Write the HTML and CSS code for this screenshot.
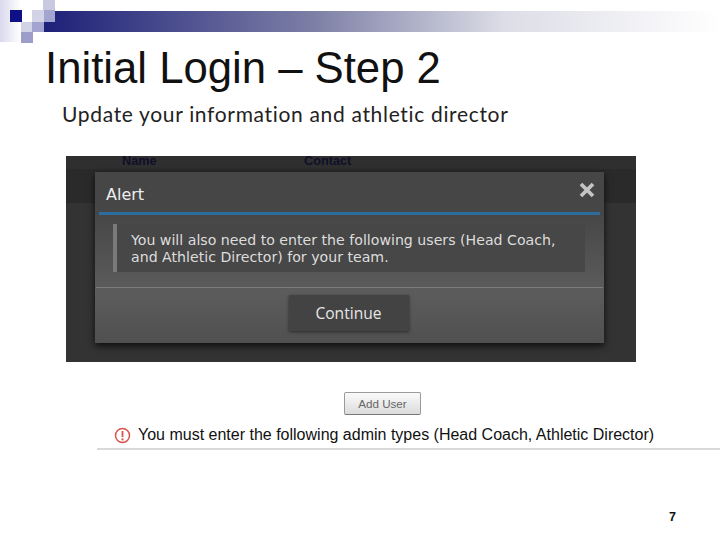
FILE: index.html
```html
<!DOCTYPE html>
<html lang="en">
<head>
    <meta charset="UTF-8">
    <meta name="viewport" content="width=device-width, initial-scale=1.0">
    <title>Initial Login - Step 2</title>
    <link rel="stylesheet" href="styles.css">
</head>
<body>
    <!-- Slide header decoration -->
    <svg class="deco" width="720" height="44" viewBox="0 0 720 44">
        <defs>
            <linearGradient id="barFade" x1="0" x2="1" y1="0" y2="0">
                <stop offset="0" stop-color="#1d2078"/>
                <stop offset="0.4" stop-color="#7d7fa6"/>
                <stop offset="0.68" stop-color="#dcdde6"/>
                <stop offset="1" stop-color="#ffffff"/>
            </linearGradient>
            <linearGradient id="sideFade" x1="0" x2="1" y1="0" y2="0">
                <stop offset="0" stop-color="#d9d9ee"/>
                <stop offset="1" stop-color="#ffffff"/>
            </linearGradient>
        </defs>
        <rect x="44" y="11" width="676" height="21" fill="url(#barFade)"/>
        <rect x="0" y="0" width="21" height="42" fill="url(#sideFade)"/>
        <rect x="10" y="10" width="12" height="12" fill="#0e1085"/>
        <rect x="43" y="0" width="12" height="10" fill="#c9c9e2"/>
        <rect x="32" y="10" width="12" height="12" fill="#d3d3e8"/>
        <rect x="44" y="10" width="11" height="12" fill="#a3a4d0"/>
        <rect x="21" y="22" width="11" height="10" fill="#d3d3e8"/>
        <rect x="32" y="22" width="12" height="10" fill="#a3a4d0"/>
        <rect x="21" y="32" width="12" height="11" fill="#9c9dc9"/>
    </svg>

    <h1 class="title">Initial Login – Step 2</h1>
    <p class="subtitle">Update your information and athletic director</p>

    <!-- Screenshot of the alert -->
    <div class="shot">
        <div class="shot-head">
            <span class="col-name">Name</span>
            <span class="col-contact">Contact</span>
        </div>
        <div class="shot-band"></div>

        <div class="modal">
            <div class="modal-top">
                <span class="modal-title">Alert</span>
                <svg class="modal-close" width="16" height="16" viewBox="0 0 16 16">
                    <path d="M2 2 L14 14 M14 2 L2 14" stroke="#c4c4c4" stroke-width="3.8" fill="none"/>
                </svg>
            </div>
            <div class="modal-msg">You will also need to enter the following users (Head Coach, and Athletic Director) for your team.</div>
            <div class="modal-foot">
                <div class="modal-btn">Continue</div>
            </div>
        </div>
    </div>

    <div class="add-row">
        <div class="add-btn">Add User</div>
    </div>

    <div class="warn">
        <svg width="17" height="17" viewBox="0 0 17 17">
            <circle cx="8.5" cy="8.5" r="7" fill="none" stroke="#d9534a" stroke-width="1.5"/>
            <path d="M8.5 4 V10" stroke="#d9534a" stroke-width="1.8"/>
            <circle cx="8.5" cy="12.4" r="1.1" fill="#d9534a"/>
        </svg>
        <span>You must enter the following admin types (Head Coach, Athletic Director)</span>
    </div>

    <div class="page-num">7</div>
</body>
</html>
```

FILE: styles.css
```css
/* General Body Styling */
body {
    margin: 0;
    width: 720px;
    height: 540px;
    overflow: hidden;
    background-color: #ffffff;
    font-family: 'Liberation Sans', Arial, sans-serif;
}

.deco {
    display: block;
}

/* Slide Titles */
.title {
    margin: 0 0 0 45px;
    font-size: 43.7px;
    line-height: 48px;
    font-weight: normal;
    color: #111111;
}

.subtitle {
    margin: 8px 0 0 62px;
    font-family: 'Lato', 'Open Sans', sans-serif;
    font-size: 21px;
    line-height: 28px;
    letter-spacing: 0.67px;
    color: #222222;
}

/* Screenshot Block */
.shot {
    position: relative;
    width: 570px;
    height: 206px;
    margin: 28px 0 0 66px;
    background-color: #333333;
}

.shot-head {
    display: flex;
    height: 13px;
    background-color: #2f2f2f;
    font-size: 12.7px;
    line-height: 10px;
    font-weight: bold;
    color: #10102a;
}

.col-name {
    margin-left: 56px;
    width: 182px;
}

.shot-band {
    height: 34px;
    background-color: #2a2a2a;
}

/* Alert Modal */
.modal {
    position: absolute;
    left: 29px;
    top: 16px;
    width: 509px;
    height: 171px;
    background: linear-gradient(#464646 0, #464646 40px, #5c5c5c 120px, #505050 100%);
    box-shadow: 0 3px 7px rgba(0, 0, 0, 0.75);
}

.modal-top {
    display: flex;
    justify-content: space-between;
    align-items: flex-start;
    height: 40px;
    margin: 0 4px;
    padding: 0 5px 0 7px;
    border-bottom: 3px solid #2a6d9e;
}

.modal-title {
    margin-top: 13px;
    font-family: 'DejaVu Sans', sans-serif;
    font-size: 16px;
    color: #eeeeee;
}

.modal-close {
    margin-top: 10px;
}

.modal-msg {
    height: 48px;
    box-sizing: border-box;
    margin: 9px 19px 0 18px;
    padding: 8px 14px;
    border-left: 4px solid #7a7a7a;
    background-color: #474747;
    font-family: 'DejaVu Sans', sans-serif;
    font-size: 14.15px;
    line-height: 17px;
    color: #dddddd;
}

.modal-foot {
    display: flex;
    justify-content: center;
    margin: 15px 1px 0;
    padding-top: 7px;
    border-top: 1px solid #7c7c7c;
}

.modal-btn {
    width: 120px;
    height: 36px;
    margin-left: -2px;
    background-color: #434343;
    box-shadow: 0 1px 3px rgba(0, 0, 0, 0.5);
    font-family: 'Open Sans', sans-serif;
    font-size: 15.6px;
    line-height: 37px;
    text-align: center;
    color: #e6e6e6;
}

/* Add User Button */
.add-row {
    display: flex;
    margin: 30px 0 0 344px;
}

.add-btn {
    box-sizing: border-box;
    width: 77px;
    height: 23px;
    border: 1px solid #9a9a9a;
    border-bottom-color: #777777;
    border-radius: 2px;
    background: linear-gradient(#fafafa, #dcdcdc);
    font-size: 11.6px;
    line-height: 22px;
    text-align: center;
    color: #666666;
}

/* Warning Line */
.warn {
    display: flex;
    align-items: center;
    gap: 7px;
    height: 26px;
    margin: 7px 0 0 97px;
    padding-left: 17px;
    border-bottom: 2px solid #d9d9d9;
    font-size: 16px;
    color: #111111;
}

/* Page Number */
.page-num {
    margin: 60px 0 0 669px;
    font-size: 12.5px;
    line-height: 14px;
    font-weight: bold;
    color: #111111;
}
```
